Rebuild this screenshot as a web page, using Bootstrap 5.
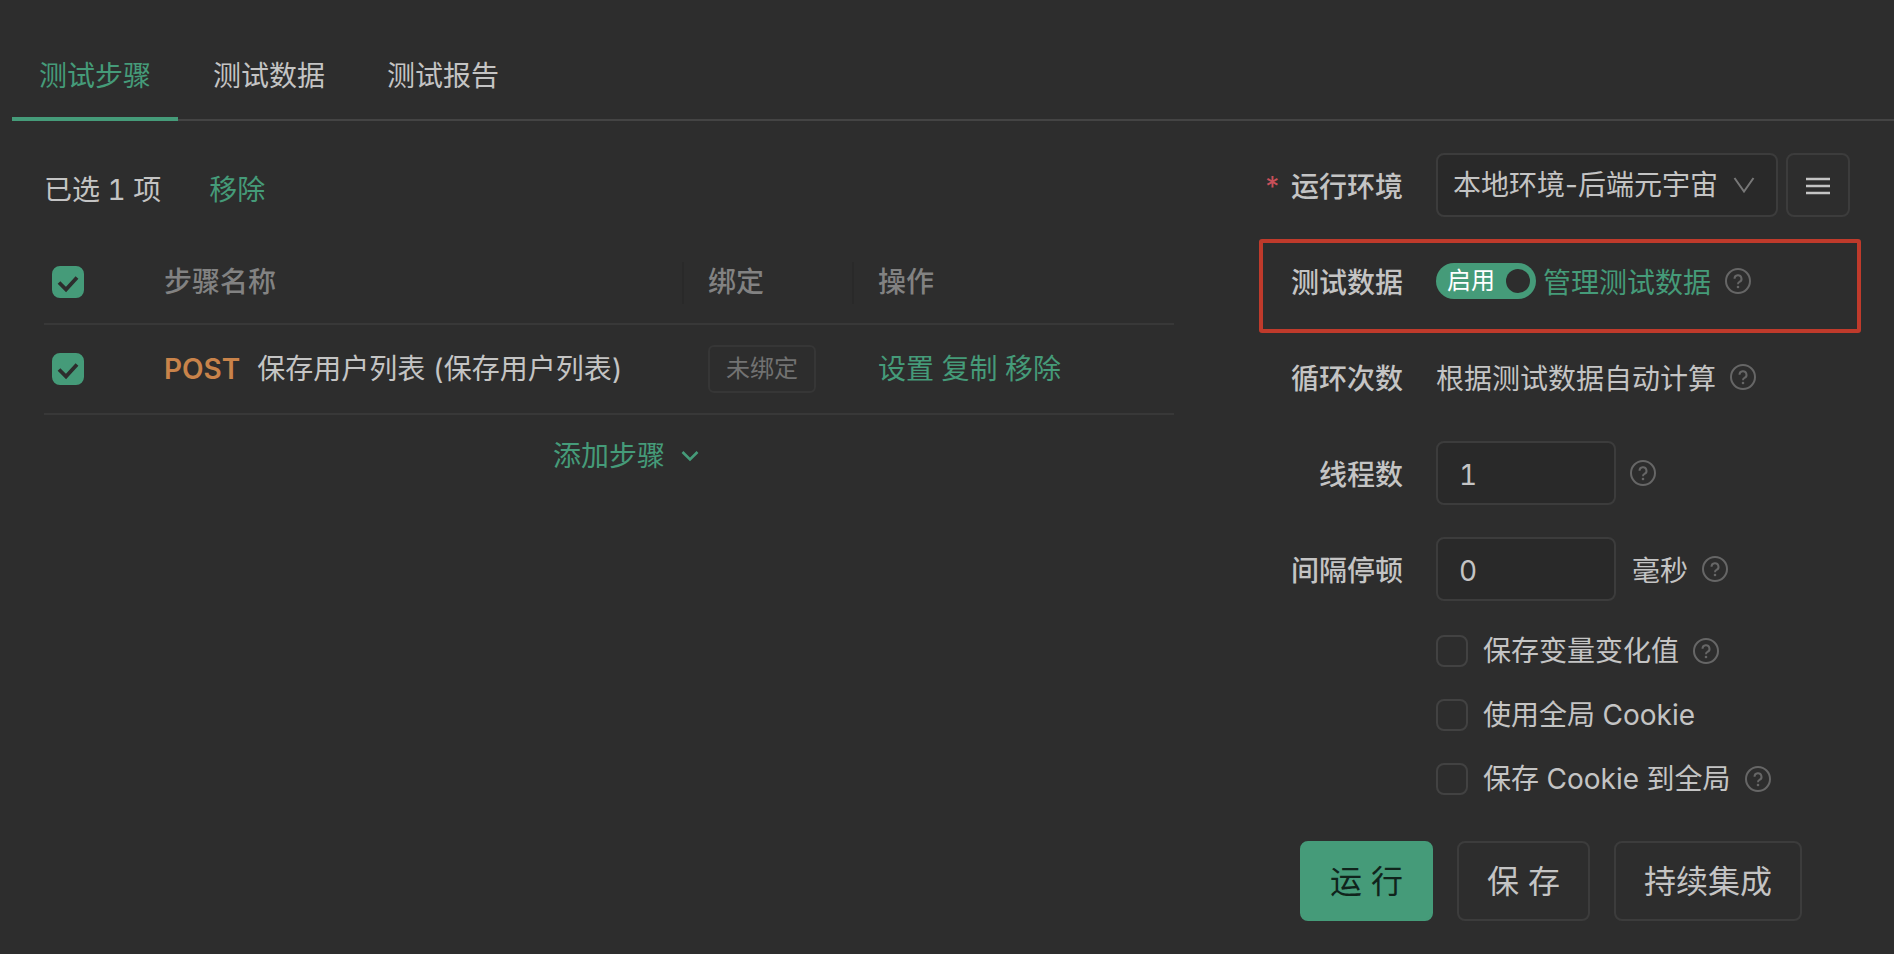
<!DOCTYPE html>
<html lang="zh-CN" data-bs-theme="dark">
<head>
<meta charset="utf-8">
<meta name="viewport" content="width=device-width, initial-scale=1">
<title>测试步骤</title>
<link href="https://cdn.jsdelivr.net/npm/bootstrap@5.3.0/dist/css/bootstrap.min.css" rel="stylesheet">
<style>
  :root {
    --page: #2d2d2d;
    --ink: #c4c4c4;
    --dim: #828282;
    --line: #3c3c3c;
    --field: #292929;
    --accent: #459b79;
  }
  body {
    background: var(--page);
    color: var(--ink);
    font: 400 28px/40px Inter, "Noto Sans CJK SC", sans-serif;
    font-variant-numeric: tabular-nums;
  }
  a { color: var(--accent); text-decoration: none; }
  a:hover { color: #5bb692; }

  .step-tabs { border-bottom: 2px solid #444; height: 121px; gap: 8px; margin-left: 12px; }
  .step-tabs .nav-link {
    color: var(--ink); height: 88px; padding: 23px 27px 0; margin-bottom: -2px;
    border: 0; border-bottom: 4px solid transparent; border-radius: 0;
  }
  .step-tabs .nav-link.active { color: var(--accent); border-color: var(--accent); }

  .workspace { padding: 16px 33px 0 44px; gap: 85px; }
  .picked-bar { height: 104px; padding-top: 2px; gap: 48px; }

  .step-table { table-layout: fixed; width: 100%; }
  .step-table th, .step-table td { border-bottom: 2px solid #383838; padding: 0 24px; vertical-align: middle; }
  .step-table th { height: 83px; font-weight: 500; color: var(--dim); position: relative; }
  .step-table td { height: 90px; }
  .step-table .pick-col { width: 96px; padding: 0 8px; }
  .step-table .bind-col { width: 170px; }
  .step-table .act-col { width: 320px; }
  .step-table .divided::after {
    content: ""; position: absolute; right: 0; top: 21px; width: 2px; height: 42px; background: #292929;
  }
  .verb { color: #c9834a; font-weight: 600; margin-right: 17px; }
  .bind-tag {
    display: inline-block; border: 2px solid #363636; border-radius: 6px;
    padding: 0 16px; font-size: 24px; line-height: 44px; color: #727272; vertical-align: middle;
  }
  .add-row { height: 82px; padding-left: 34px; }
  .add-row button { color: var(--accent); gap: 16px; font-size: 28px; line-height: 40px; }

  .form-check-input.tick {
    width: 32px; height: 32px; margin: 0; flex: none; float: none; display: block;
    border: 2px solid #424242; border-radius: 8px; background-color: transparent;
  }
  .form-check-input.tick:checked {
    border-color: var(--accent); background-color: var(--accent); background-size: 24px 24px;
    background-image: url("data:image/svg+xml,%3Csvg xmlns='http://www.w3.org/2000/svg' viewBox='0 0 24 24'%3E%3Cpath d='M3 12.500l7 7L21 7.500' fill='none' stroke='%232d2d2d' stroke-width='3.800'/%3E%3C/svg%3E");
  }

  .run-panel { flex: 0 0 602px; }
  .set-row { height: 96px; position: relative; gap: 33px; }
  .set-name { width: 144px; text-align: right; font-weight: 500; white-space: nowrap; }
  .set-name, .set-text { padding-top: 4px; }
  .set-name .must { color: #c9505a; font-weight: 400; margin-right: 2px; }
  .flagged::after {
    content: ""; position: absolute; inset: 6px 0 -4px; border: 4px solid #bf3a2b; border-radius: 3px; pointer-events: none;
  }
  .field, .field:focus {
    height: 64px; border: 2px solid var(--line); border-radius: 8px; background-color: var(--field);
    color: var(--ink); font-size: 28px; line-height: 40px; box-shadow: none;
  }
  .num-field, .num-field:focus { width: 180px; padding: 4px 21px 0; font-variant-numeric: tabular-nums; }
  .env-field, .env-field:focus {
    width: 342px; padding: 0 56px 0 15px;
    background-image: url("data:image/svg+xml,%3Csvg xmlns='http://www.w3.org/2000/svg' viewBox='0 0 22 16'%3E%3Cpath d='M1.500 1L11 14.500 20.500 1' fill='none' stroke='%23777' stroke-width='2'/%3E%3C/svg%3E");
    background-size: 22px 16px; background-position: right 21px center;
  }
  .menu-btn { width: 64px; height: 64px; border: 2px solid var(--line); border-radius: 8px; color: var(--ink); padding: 2px 0 0; }
  .env-pair { gap: 8px; }

  .toggle-pill { width: 100px; height: 36px; position: relative; margin-right: 7px; }
  .form-check-input.pill, .form-check-input.pill:checked {
    width: 100px; height: 36px; margin: 0; float: none; display: block; border: 0; border-radius: 18px;
    background-color: var(--accent); background-size: 24px 24px; background-position: right 6px center; background-repeat: no-repeat;
    background-image: url("data:image/svg+xml,%3Csvg xmlns='http://www.w3.org/2000/svg' viewBox='0 0 24 24'%3E%3Ccircle cx='12' cy='12' r='12' fill='%232d2d2d'/%3E%3C/svg%3E");
  }
  .toggle-pill label { position: absolute; left: 11px; top: 0; font-size: 24px; line-height: 36px; color: #fff; }

  .help-dot { width: 26px; height: 26px; flex: none; display: block; color: #666; margin-left: 14px; }
  .check-list { padding: 2px 0 0 177px; }
  .check-list > div { height: 64px; }
  .check-list label { margin-left: 15px; }
  .run-actions { margin: 30px 0 32px 41px; gap: 24px; }
  .run-actions .btn {
    height: 80px; padding: 2px 28px 0; font-size: 32px; line-height: 40px; border: 2px solid var(--line);
    border-radius: 8px; color: var(--ink); white-space: nowrap;
  }
  .run-actions .btn-go { background: var(--accent); border-color: var(--accent); color: #10241c; }
</style>
</head>
<body>
<svg class="d-none" aria-hidden="true">
  <symbol id="help" viewBox="0 0 26 26">
    <circle cx="13" cy="13" r="12" fill="none" stroke="currentColor" stroke-width="2"/>
    <path d="M9.500 10.700a3.500 3.500 0 1 1 5 3.200c-1 .500-1.500 1-1.500 2.300" fill="none" stroke="currentColor" stroke-width="2"/>
    <circle cx="13" cy="19" r="1.300" fill="currentColor"/>
  </symbol>
</svg>

<nav class="nav step-tabs align-items-end flex-nowrap">
  <a class="nav-link active" href="#steps" aria-current="page">测试步骤</a>
  <a class="nav-link" href="#data">测试数据</a>
  <a class="nav-link" href="#report">测试报告</a>
</nav>

<main class="workspace d-flex align-items-start">
  <section class="flex-grow-1">
    <div class="picked-bar d-flex align-items-center">
      <span>已选 1 项</span>
      <a href="#remove-all">移除</a>
    </div>
    <table class="step-table">
      <thead>
        <tr>
          <th class="pick-col"><input class="form-check-input tick" type="checkbox" checked aria-label="全选"></th>
          <th class="divided">步骤名称</th>
          <th class="bind-col divided">绑定</th>
          <th class="act-col">操作</th>
        </tr>
      </thead>
      <tbody>
        <tr>
          <td class="pick-col"><input class="form-check-input tick" type="checkbox" checked aria-label="选择步骤"></td>
          <td class="text-nowrap"><span class="verb">POST</span>保存用户列表 (保存用户列表)</td>
          <td><span class="bind-tag text-nowrap">未绑定</span></td>
          <td class="text-nowrap"><a href="#set">设置</a> <a href="#copy">复制</a> <a href="#remove">移除</a></td>
        </tr>
      </tbody>
    </table>
    <div class="add-row d-flex align-items-center justify-content-center">
      <button class="btn p-0 border-0 d-flex align-items-center" type="button">添加步骤
        <svg width="18" height="12" viewBox="0 0 18 12" fill="none" stroke="currentColor" stroke-width="2.600"><path d="M1.500 2L9 9.500 16.500 2"/></svg>
      </button>
    </div>
  </section>

  <form class="run-panel">
    <div class="set-row d-flex align-items-center">
      <label class="set-name" for="env"><span class="must">*</span> 运行环境</label>
      <div class="env-pair d-flex">
        <select class="form-select field env-field" id="env"><option>本地环境-后端元宇宙</option></select>
        <button class="btn menu-btn d-flex align-items-center justify-content-center" type="button" aria-label="环境菜单">
          <svg width="24" height="18" viewBox="0 0 24 18" stroke="currentColor" stroke-width="2.600"><path d="M0 2h24M0 9h24M0 16h24"/></svg>
        </button>
      </div>
    </div>
    <div class="set-row flagged d-flex align-items-center">
      <span class="set-name">测试数据</span>
      <div class="d-flex align-items-center">
        <div class="toggle-pill">
          <input class="form-check-input pill" type="checkbox" role="switch" id="useData" checked>
          <label for="useData">启用</label>
        </div>
        <a class="set-text" href="#manage">管理测试数据</a>
        <svg class="help-dot"><use href="#help"/></svg>
      </div>
    </div>
    <div class="set-row d-flex align-items-center">
      <span class="set-name">循环次数</span>
      <div class="d-flex align-items-center">
        <span class="set-text">根据测试数据自动计算</span>
        <svg class="help-dot"><use href="#help"/></svg>
      </div>
    </div>
    <div class="set-row d-flex align-items-center">
      <label class="set-name" for="threads">线程数</label>
      <div class="d-flex align-items-center">
        <input class="form-control field num-field" id="threads" type="text" inputmode="numeric" value="1">
        <svg class="help-dot"><use href="#help"/></svg>
      </div>
    </div>
    <div class="set-row d-flex align-items-center">
      <label class="set-name" for="pause">间隔停顿</label>
      <div class="d-flex align-items-center">
        <input class="form-control field num-field me-3" id="pause" type="text" inputmode="numeric" value="0">
        <span class="set-text">毫秒</span>
        <svg class="help-dot"><use href="#help"/></svg>
      </div>
    </div>
    <div class="check-list">
      <div class="d-flex align-items-center">
        <input class="form-check-input tick" type="checkbox" id="keepVars">
        <label for="keepVars">保存变量变化值</label>
        <svg class="help-dot"><use href="#help"/></svg>
      </div>
      <div class="d-flex align-items-center">
        <input class="form-check-input tick" type="checkbox" id="useCookie">
        <label for="useCookie">使用全局 Cookie</label>
      </div>
      <div class="d-flex align-items-center">
        <input class="form-check-input tick" type="checkbox" id="saveCookie">
        <label for="saveCookie">保存 Cookie 到全局</label>
        <svg class="help-dot"><use href="#help"/></svg>
      </div>
    </div>
    <div class="run-actions d-flex">
      <button class="btn btn-go" type="button">运 行</button>
      <button class="btn" type="button">保 存</button>
      <button class="btn" type="button">持续集成</button>
    </div>
  </form>
</main>
<script src="https://cdn.jsdelivr.net/npm/bootstrap@5.3.0/dist/js/bootstrap.bundle.min.js"></script>
</body>
</html>
